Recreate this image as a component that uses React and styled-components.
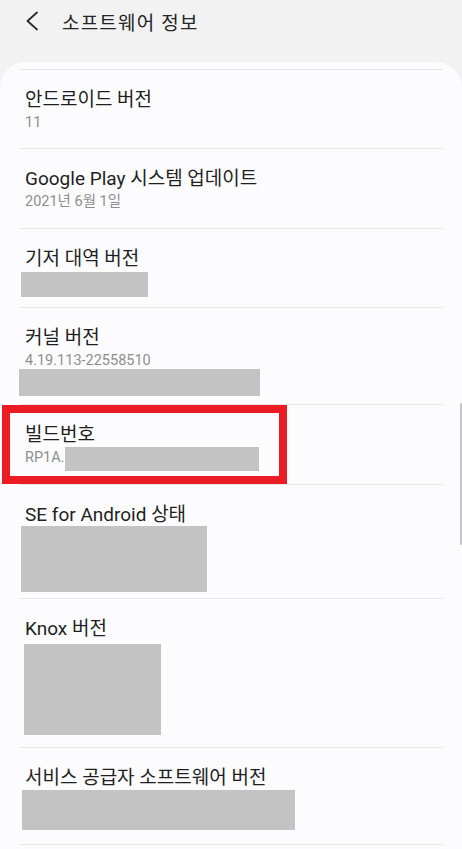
import styled, { createGlobalStyle } from "styled-components";

const GlobalStyle = createGlobalStyle`
  html, body {
    margin: 0;
    padding: 0;
    background: #f2f2f2;
  }
  body {
    font-family: "Roboto", "Noto Sans CJK KR", sans-serif;
    -webkit-font-smoothing: antialiased;
  }
`;

const items = [
  { title: "안드로이드 버전", sub: "11", pb: 16 },
  { title: "Google Play 시스템 업데이트", sub: "2021년 6월 1일", pb: 17 },
  { title: "기저 대역 버전", box: { w: 127, h: 25, dx: -4, mt: 2 }, pb: 10 },
  {
    title: "커널 버전",
    sub: "4.19.113-22558510",
    box: { w: 241, h: 27, dx: -6, mt: -1 },
    pb: 8,
  },
  {
    title: "빌드번호",
    sub: "RP1A.",
    inlineBox: { w: 194, h: 24, mt: 1 },
    pb: 13,
    highlighted: true,
  },
  { title: "SE for Android 상태", box: { w: 186, h: 66, dx: -4, mt: 0 }, pb: 6 },
  { title: "Knox 버전", box: { w: 137, h: 91, dx: -1, mt: 4 }, pb: 12 },
  {
    title: "서비스 공급자 소프트웨어 버전",
    box: { w: 273, h: 40, dx: -3, mt: 1 },
    pb: 14,
  },
];

function App() {
  return (
    <Page>
      <GlobalStyle />
      <Header>
        <BackButton type="button" aria-label="뒤로">
          <svg width="14" height="20" viewBox="0 0 14 20">
            <path
              d="M12 1.5 L2.5 10 L12 18.5"
              fill="none"
              stroke="#2b2b2b"
              strokeWidth="1.8"
              strokeLinecap="round"
              strokeLinejoin="round"
            />
          </svg>
        </BackButton>
        <h1>소프트웨어 정보</h1>
      </Header>
      <Card>
        <List>
          {items.map((item) => (
            <Item key={item.title} $pb={item.pb}>
              {item.highlighted && <Highlight />}
              <Title>{item.title}</Title>
              {item.inlineBox ? (
                <SubRow>
                  <Sub>{item.sub}</Sub>
                  <Redaction
                    $w={item.inlineBox.w}
                    $h={item.inlineBox.h}
                    $mt={item.inlineBox.mt}
                  />
                </SubRow>
              ) : (
                item.sub && <Sub>{item.sub}</Sub>
              )}
              {item.box && (
                <Redaction
                  $w={item.box.w}
                  $h={item.box.h}
                  $dx={item.box.dx}
                  $mt={item.box.mt}
                />
              )}
            </Item>
          ))}
        </List>
      </Card>
      <ScrollThumb />
    </Page>
  );
}

const Page = styled.div`
  position: relative;
  min-height: 849px;
  overflow: hidden;
`;

const Header = styled.header`
  display: flex;
  align-items: center;
  height: 42px;
  padding-left: 25px;
  margin-bottom: 20px;
  h1 {
    margin: 0 0 0 20px;
    font-size: 19px;
    font-weight: 400;
    color: #252525;
    letter-spacing: 1.2px;
  }
`;

const BackButton = styled.button`
  display: flex;
  align-items: center;
  padding: 0;
  border: none;
  background: none;
  width: 17px;
  height: 20px;
`;

const Card = styled.main`
  background: #fcfcfe;
  border-radius: 26px 26px 0 0;
  padding: 7px 19px 0 20px;
  min-height: 787px;
`;

const List = styled.section`
  display: flex;
  flex-direction: column;
`;

const Item = styled.article`
  position: relative;
  display: flex;
  flex-direction: column;
  align-items: flex-start;
  border-top: 1px solid #e6e6e8;
  padding: 18px 0 ${(p) => p.$pb}px 5px;
  &:last-child {
    border-bottom: 1px solid #e6e6e8;
  }
`;

const Title = styled.h2`
  margin: 0;
  font-size: 19px;
  line-height: 23px;
  font-weight: 400;
  color: #1f1f1f;
`;

const Sub = styled.p`
  margin: 3px 0 0;
  font-size: 14.5px;
  line-height: 18px;
  color: #8e8e8e;
`;

const SubRow = styled.div`
  display: flex;
  align-items: flex-start;
`;

const Redaction = styled.div`
  width: ${(p) => p.$w}px;
  height: ${(p) => p.$h}px;
  margin-top: ${(p) => p.$mt || 0}px;
  margin-left: ${(p) => p.$dx || 0}px;
  background: #c3c3c3;
`;

const Highlight = styled.div`
  position: absolute;
  top: 0;
  left: -18px;
  width: 285px;
  height: 79px;
  box-sizing: border-box;
  border: 8px solid #ec1c24;
  pointer-events: none;
`;

const ScrollThumb = styled.div`
  position: absolute;
  top: 403px;
  right: 0;
  width: 2px;
  height: 142px;
  border-radius: 1px;
  background: #c6c6c6;
`;

export default App;
